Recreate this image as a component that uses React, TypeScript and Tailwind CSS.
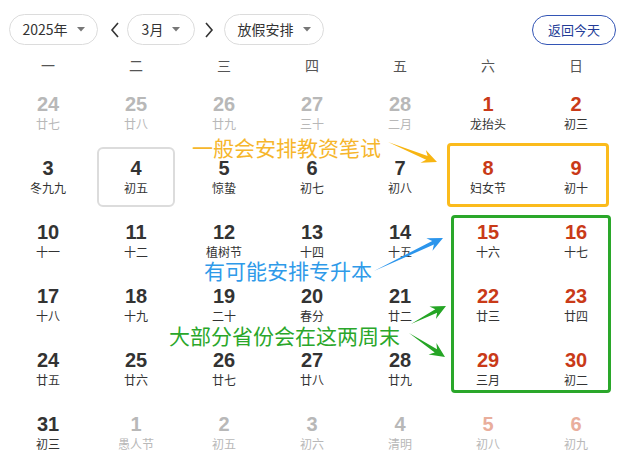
import React from 'react';

type Kind = '' | 'o' | 'w' | 'ow' | 't';
type Day = [number, string, Kind?];

const rows: Day[][] = [
  [[24, '廿七', 'o'], [25, '廿八', 'o'], [26, '廿九', 'o'], [27, '三十', 'o'], [28, '二月', 'o'], [1, '龙抬头', 'w'], [2, '初三', 'w']],
  [[3, '冬九九'], [4, '初五', 't'], [5, '惊蛰'], [6, '初七'], [7, '初八'], [8, '妇女节', 'w'], [9, '初十', 'w']],
  [[10, '十一'], [11, '十二'], [12, '植树节'], [13, '十四'], [14, '十五'], [15, '十六', 'w'], [16, '十七', 'w']],
  [[17, '十八'], [18, '十九'], [19, '二十'], [20, '春分'], [21, '廿二'], [22, '廿三', 'w'], [23, '廿四', 'w']],
  [[24, '廿五'], [25, '廿六'], [26, '廿七'], [27, '廿八'], [28, '廿九'], [29, '三月', 'w'], [30, '初二', 'w']],
  [[31, '初三'], [1, '愚人节', 'o'], [2, '初五', 'o'], [3, '初六', 'o'], [4, '清明', 'o'], [5, '初八', 'ow'], [6, '初九', 'ow']],
];

const weekdays = ['一', '二', '三', '四', '五', '六', '日'];

const numColor: Record<string, string> = {
  '': 'text-[#333333]',
  t: 'text-[#333333]',
  o: 'text-[#b8b8b8]',
  w: 'text-[#c93a18]',
  ow: 'text-[#e9ae9c]',
};

const lunarColor: Record<string, string> = {
  '': 'text-[#333333]',
  t: 'text-[#333333]',
  o: 'text-[#b8b8b8]',
  w: 'text-[#333333]',
  ow: 'text-[#b8b8b8]',
};

const Caret = () => (
  <svg width="8" height="5" viewBox="0 0 8 5" className="ml-[9px]">
    <path d="M0 0 L8 0 L4 4.5 Z" fill="#777" />
  </svg>
);

const Pill: React.FC<{ label: string; w: string }> = ({ label, w }) => (
  <button className={`${w} h-[31px] rounded-full border border-[#dcdcdc] bg-white flex items-center justify-center text-[14px] text-[#333]`}>
    {label}
    <Caret />
  </button>
);

// tapered arrow polygon, thin tail widening into a barbed head
function arrow(x1: number, y1: number, x2: number, y2: number, head = 15, hw = 7, sw = 2) {
  const dx = x2 - x1;
  const dy = y2 - y1;
  const len = Math.hypot(dx, dy);
  const ux = dx / len;
  const uy = dy / len;
  const nx = -uy;
  const ny = ux;
  const bx = x2 - ux * head;
  const by = y2 - uy * head;
  const hx = x2 - ux * (head + 0);
  const hy = y2 - uy * (head + 0);
  const pts = [
    [x1, y1],
    [bx + ux * 4 + nx * sw, by + uy * 4 + ny * sw],
    [hx + nx * hw, hy + ny * hw],
    [x2, y2],
    [hx - nx * hw, hy - ny * hw],
    [bx + ux * 4 - nx * sw, by + uy * 4 - ny * sw],
  ];
  return pts.map((p) => p.map((v) => v.toFixed(1)).join(',')).join(' ');
}

export default function App() {
  return (
    <div className="relative w-[633px] h-[476px] overflow-hidden bg-white font-['Noto_Sans_CJK_SC','Liberation_Sans',sans-serif]">
      {/* toolbar */}
      <div className="flex items-center pt-[14px] pl-[9px] pr-[17px]">
        <Pill label="2025年" w="w-[89px]" />
        <svg width="12" height="16" viewBox="0 0 12 16" className="ml-[11px]">
          <path d="M9 1 L3 8 L9 15" fill="none" stroke="#333" strokeWidth="1.6" />
        </svg>
        <div className="ml-[6px]">
          <Pill label="3月" w="w-[68px]" />
        </div>
        <svg width="12" height="16" viewBox="0 0 12 16" className="ml-[8px]">
          <path d="M3 1 L9 8 L3 15" fill="none" stroke="#333" strokeWidth="1.6" />
        </svg>
        <div className="ml-[9px]">
          <Pill label="放假安排" w="w-[100px]" />
        </div>
        <button className="ml-auto w-[84px] h-[30px] rounded-full border-[1.5px] border-[#3355b5] text-[13px] text-[#233c97] flex items-center justify-center">
          返回今天
        </button>
      </div>

      {/* calendar */}
      <div className="ml-[4px] w-[616px] mt-[4px]">
        <div className="grid grid-cols-7 h-[32px] items-center">
          {weekdays.map((d) => (
            <div key={d} className="text-center text-[14px] text-[#555]">
              {d}
            </div>
          ))}
        </div>
        {rows.map((row, ri) => (
          <div key={ri} className="grid grid-cols-7 h-[64px]">
            {row.map(([n, l, k = ''], ci) => (
              <div key={ci} className="flex items-center justify-center">
                <div
                  className={`w-[78px] h-[60px] flex flex-col items-center justify-center rounded-[6px] border-2 ${
                    k === 't' ? 'border-[#dcdcdc]' : 'border-transparent'
                  }`}
                >
                  <span className={`font-['Liberation_Sans',sans-serif] font-bold text-[20px] leading-[22px] ${numColor[k]}`}>
                    {n}
                  </span>
                  <span className={`mt-[2px] mb-[2px] text-[12px] leading-[14px] ${lunarColor[k]}`}>{l}</span>
                </div>
              </div>
            ))}
          </div>
        ))}
      </div>

      {/* annotation boxes */}
      <div className="absolute left-[447px] top-[143px] w-[162px] h-[64px] border-[3px] border-[#fbbb1c] rounded-[4px]" />
      <div className="absolute left-[451px] top-[215px] w-[160px] h-[178px] border-[3px] border-[#2aa72a] rounded-[4px]" />

      {/* annotation labels */}
      <div className="absolute left-[192px] top-[136px] text-[21px] leading-[22px] text-[#f6b62c]">一般会安排教资笔试</div>
      <div className="absolute left-[204px] top-[259px] text-[21px] leading-[22px] text-[#2f9ae9]">有可能安排专升本</div>
      <div className="absolute left-[169px] top-[324px] text-[21px] leading-[22px] text-[#2aa72a]">大部分省份会在这两周末</div>

      <svg className="absolute inset-0 pointer-events-none" width="633" height="476">
        <polygon points={arrow(388, 142, 437, 162)} fill="#f7b512" />
        <polygon points={arrow(374, 271, 443, 238)} fill="#2b95ec" />
        <polygon points={arrow(411, 324, 446, 306)} fill="#25a525" />
        <polygon points={arrow(409, 333, 445, 357)} fill="#25a525" />
      </svg>
    </div>
  );
}
